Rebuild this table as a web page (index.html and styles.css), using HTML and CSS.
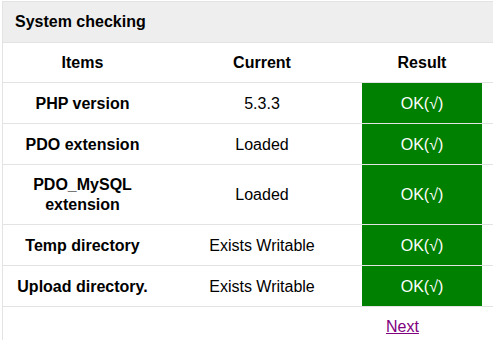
FILE: index.html
```html
<!DOCTYPE html>
<html>
<head>
<meta charset="utf-8">
<title>System checking</title>
<link rel="stylesheet" href="styles.css">
</head>
<body>
<div class="panel">
  <div class="panel-title">System checking</div>
  <div class="row row-head">
    <div class="cell">Items</div>
    <div class="cell">Current</div>
    <div class="cell">Result</div>
  </div>
  <div class="row">
    <div class="cell item">PHP version</div>
    <div class="cell">5.3.3</div>
    <div class="cell ok">OK(√)</div>
  </div>
  <div class="row">
    <div class="cell item">PDO extension</div>
    <div class="cell">Loaded</div>
    <div class="cell ok">OK(√)</div>
  </div>
  <div class="row row-tall">
    <div class="cell item">PDO_MySQL<br>extension</div>
    <div class="cell">Loaded</div>
    <div class="cell ok">OK(√)</div>
  </div>
  <div class="row">
    <div class="cell item">Temp directory</div>
    <div class="cell">Exists Writable</div>
    <div class="cell ok">OK(√)</div>
  </div>
  <div class="row">
    <div class="cell item">Upload directory.</div>
    <div class="cell">Exists Writable</div>
    <div class="cell ok">OK(√)</div>
  </div>
  <div class="footer"><a class="next" href="#">Next</a></div>
</div>
</body>
</html>
```
FILE: styles.css
```css
html, body {
  margin: 0;
  padding: 0;
  overflow: hidden;
  background: #fff;
}
body {
  font-family: "Liberation Sans", Arial, sans-serif;
  font-size: 16px;
  color: #000;
}
.panel {
  box-sizing: border-box;
  margin: 1px 0 0 2px;
  height: calc(100vh - 1px);
  border: 1px solid #e3e3e3;
  border-right: none;
  border-bottom: none;
}
.panel-title {
  height: 40px;
  line-height: 40px;
  background: #eeeeee;
  border-bottom: 1px solid #e3e3e3;
  padding-left: 12px;
  font-weight: bold;
}
.row {
  display: grid;
  grid-template-columns: 159px 200px 120px 1fr;
  height: 40px;
  border-bottom: 1px solid #e3e3e3;
  line-height: 20px;
}
.row-head {
  height: 39px;
  font-weight: bold;
}
.row-tall {
  height: 59px;
}
.cell {
  display: flex;
  align-items: center;
  justify-content: center;
  text-align: center;
  padding-top: 2px;
}
.row-head .cell,
.row-tall .cell {
  padding-top: 0;
}
.item {
  font-weight: bold;
}
.ok {
  background: #008000;
  color: #fff;
}
.footer {
  padding: 10px 0 0 383px;
  line-height: 20px;
}
.next {
  color: #800080;
  text-decoration: underline;
}
```
